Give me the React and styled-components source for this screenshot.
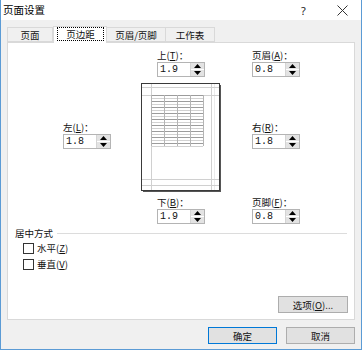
import React from 'react';
import styled, { createGlobalStyle } from 'styled-components';

const Global = createGlobalStyle`
  html, body { margin: 0; padding: 0; background: #ffffff; }
  body { font-family: "Noto Sans CJK SC", "Noto Sans", sans-serif; color: #111; }
  * { box-sizing: border-box; }
  u { text-decoration: underline; text-underline-offset: 1px; }
`;

const Window = styled.div`
  width: 362px;
  height: 350px;
  border: 1px solid #5b9bd5;
  border-top: none;
  background: #f0f0f0;
  display: flex;
  flex-direction: column;
`;

const TitleBar = styled.div`
  height: 20px;
  background: #ffffff;
  display: flex;
  align-items: center;
  padding-left: 2px;
`;

const Title = styled.div`
  font-size: 10.5px;
  line-height: 20px;
  color: #000;
  flex: 1;
`;

const TitleButton = styled.div`
  width: ${p => p.$w}px;
  height: 20px;
  display: flex;
  align-items: center;
  justify-content: center;
  font-family: "Noto Sans", sans-serif;
  font-size: 11px;
  color: #222;
`;

const Body = styled.div`
  flex: 1;
  display: flex;
  flex-direction: column;
  padding: 6px 6px 0 6px;
`;

const TabRow = styled.div`
  height: 16px;
  display: flex;
  align-items: flex-end;
`;

const Tab = styled.div`
  width: ${p => p.$w}px;
  height: ${p => (p.$active ? 17 : 15)}px;
  margin-bottom: ${p => (p.$active ? -1 : 0)}px;
  background: ${p => (p.$active ? '#ffffff' : '#f0f0f0')};
  border: 1px solid #d9d9d9;
  border-bottom: ${p => (p.$active ? 'none' : '1px solid #d9d9d9')};
  border-left: ${p => (p.$first || p.$active ? '1px solid #d9d9d9' : 'none')};
  position: relative;
  z-index: ${p => (p.$active ? 2 : 1)};
  display: flex;
  padding: ${p => (p.$active ? '0 2px 2px 3px' : '0')};
`;

const TabLabel = styled.div`
  flex: 1;
  display: flex;
  align-items: center;
  justify-content: center;
  font-size: 9.5px;
  color: #111;
  border: ${p => (p.$focus ? '1px dotted #000' : 'none')};
`;

const Panel = styled.div`
  height: 278px;
  background: #ffffff;
  border: 1px solid #d9d9d9;
  display: flex;
  flex-direction: column;
`;

const MarginGrid = styled.div`
  display: grid;
  grid-template-columns: 48px 81px 48px;
  column-gap: 30px;
  row-gap: 0;
  padding: 6px 0 0 55px;
`;

const FieldGroup = styled.div`
  grid-column: ${p => p.$col};
  grid-row: ${p => p.$row};
  margin-left: ${p => p.$indent || 0}px;
  margin-top: ${p => p.$top || 0}px;
  align-self: ${p => p.$align || 'start'};
  width: 48px;
  display: flex;
  flex-direction: column;
`;

const Label = styled.div`
  font-size: 9.5px;
  line-height: 12px;
  height: 12px;
  margin-bottom: 1px;
  color: #111;
  white-space: nowrap;
`;

const Field = styled.div`
  height: 15px;
  border: 1px solid #b4b4b4;
  background: #fff;
  display: flex;
`;

const Value = styled.div`
  flex: 1;
  font-family: "Liberation Mono", monospace;
  font-size: 10px;
  line-height: 13px;
  padding-left: 2px;
  color: #111;
`;

const Spinner = styled.div`
  width: 14px;
  display: flex;
  flex-direction: column;
  gap: 1px;
  padding: 0;
  border-left: 1px solid #d4d4d4;
`;

const SpinButton = styled.div`
  flex: 1;
  background: #e3e3e3;
  display: flex;
  align-items: center;
  justify-content: center;
`;

const PreviewCell = styled.div`
  grid-column: 2;
  grid-row: 2;
  width: 81px;
  height: 110px;
  margin-top: 6px;
`;

const SectionHeader = styled.div`
  display: flex;
  align-items: center;
  gap: 4px;
  padding: 0 7px 0 7px;
  margin-top: 3px;
`;

const SectionTitle = styled.div`
  font-size: 9.5px;
  line-height: 12px;
  color: #111;
`;

const Rule = styled.div`
  flex: 1;
  height: 1px;
  background: #dcdcdc;
`;

const CheckList = styled.div`
  display: flex;
  flex-direction: column;
  gap: 2px;
  padding-left: 15px;
  margin-top: 2px;
`;

const CheckRow = styled.div`
  height: 14px;
  display: flex;
  align-items: center;
  gap: 3px;
`;

const CheckBox = styled.div`
  width: 11px;
  height: 11px;
  border: 1px solid #333;
  background: #fff;
`;

const CheckText = styled.div`
  font-size: 9.5px;
  color: #111;
`;

const OptionsRow = styled.div`
  margin-top: auto;
  display: flex;
  justify-content: flex-end;
  padding: 0 6px 6px 0;
`;

const Button = styled.div`
  width: ${p => p.$w || 69}px;
  height: 17px;
  background: #e1e1e1;
  border: 1px solid ${p => (p.$default ? '#0078d7' : '#adadad')};
  display: flex;
  align-items: center;
  justify-content: center;
  font-size: 9.5px;
  color: #111;
  white-space: nowrap;
`;

const ButtonRow = styled.div`
  display: flex;
  justify-content: flex-end;
  gap: 9px;
  margin-top: 7px;
`;

const Up = () => (
  <svg width="7" height="4" viewBox="0 0 7 4"><polygon points="0,4 7,4 3.5,0" fill="#000" /></svg>
);
const Down = () => (
  <svg width="7" height="4" viewBox="0 0 7 4"><polygon points="0,0 7,0 3.5,4" fill="#000" /></svg>
);

const SpinField = ({ value }) => (
  <Field>
    <Value>{value}</Value>
    <Spinner>
      <SpinButton><Up /></SpinButton>
      <SpinButton><Down /></SpinButton>
    </Spinner>
  </Field>
);

const PagePreview = () => {
  const rows = [];
  for (let i = 0; i <= 17; i++) {
    const y = 12.5 + i * 3;
    rows.push(
      <line key={'r' + i} x1="10" x2="62" y1={y} y2={y} stroke={i % 2 ? '#d2d2d2' : '#9c9c9c'} strokeWidth="1" />
    );
  }
  const cols = [10.5, 23.5, 36.5, 49.5, 62.5].map((x, i) => (
    <line key={'c' + i} x1={x} x2={x} y1="12" y2="63" stroke="#b4b4b4" strokeWidth="1" />
  ));
  return (
    <svg width="81" height="110" viewBox="0 0 81 110">
      <rect x="0" y="0" width="80" height="109" fill="#fff" />
      <line x1="10.5" x2="10.5" y1="1" y2="108" stroke="#d0d0d0" />
      <line x1="70.5" x2="70.5" y1="1" y2="108" stroke="#d0d0d0" />
      <line x1="73.5" x2="73.5" y1="1" y2="108" stroke="#ececec" />
      <line x1="1" x2="79" y1="4.5" y2="4.5" stroke="#d0d0d0" />
      <line x1="1" x2="79" y1="12.5" y2="12.5" stroke="#d0d0d0" />
      <line x1="1" x2="79" y1="96.5" y2="96.5" stroke="#d0d0d0" />
      <line x1="1" x2="79" y1="102.5" y2="102.5" stroke="#d0d0d0" />
      {rows}
      {cols}
      <rect x="0.5" y="0.5" width="78" height="107" fill="none" stroke="#3a3a3a" />
      <line x1="79.5" x2="79.5" y1="2" y2="109" stroke="#555" />
      <line x1="2" x2="80" y1="108.5" y2="108.5" stroke="#555" />
    </svg>
  );
};

export default function App() {
  return (
    <>
      <Global />
      <Window>
        <TitleBar>
          <Title>页面设置</Title>
          <TitleButton $w={39}>?</TitleButton>
          <TitleButton $w={38}>
            <svg width="11" height="11" viewBox="0 0 11 11">
              <path d="M0.5 0.5 L10.5 10.5 M10.5 0.5 L0.5 10.5" stroke="#333" strokeWidth="1" />
            </svg>
          </TitleButton>
        </TitleBar>
        <Body>
          <TabRow>
            <Tab $w={46} $first><TabLabel>页面</TabLabel></Tab>
            <Tab $w={54} $active><TabLabel $focus>页边距</TabLabel></Tab>
            <Tab $w={59}><TabLabel>页眉/页脚</TabLabel></Tab>
            <Tab $w={49}><TabLabel>工作表</TabLabel></Tab>
          </TabRow>
          <Panel>
            <MarginGrid>
              <FieldGroup $col={2} $row={1} $indent={16}>
                <Label>上(<u>T</u>)：</Label>
                <SpinField value="1.9" />
              </FieldGroup>
              <FieldGroup $col={3} $row={1}>
                <Label>页眉(<u>A</u>)：</Label>
                <SpinField value="0.8" />
              </FieldGroup>
              <FieldGroup $col={1} $row={2} $align="center">
                <Label>左(<u>L</u>)：</Label>
                <SpinField value="1.8" />
              </FieldGroup>
              <PreviewCell>
                <PagePreview />
              </PreviewCell>
              <FieldGroup $col={3} $row={2} $align="center">
                <Label>右(<u>R</u>)：</Label>
                <SpinField value="1.8" />
              </FieldGroup>
              <FieldGroup $col={2} $row={3} $indent={16} $top={3}>
                <Label>下(<u>B</u>)：</Label>
                <SpinField value="1.9" />
              </FieldGroup>
              <FieldGroup $col={3} $row={3} $top={3}>
                <Label>页脚(<u>F</u>)：</Label>
                <SpinField value="0.8" />
              </FieldGroup>
            </MarginGrid>
            <SectionHeader>
              <SectionTitle>居中方式</SectionTitle>
              <Rule />
            </SectionHeader>
            <CheckList>
              <CheckRow>
                <CheckBox />
                <CheckText>水平(<u>Z</u>)</CheckText>
              </CheckRow>
              <CheckRow>
                <CheckBox />
                <CheckText>垂直(<u>V</u>)</CheckText>
              </CheckRow>
            </CheckList>
            <OptionsRow>
              <Button $w={70}>选项(<u>O</u>)...</Button>
            </OptionsRow>
          </Panel>
          <ButtonRow>
            <Button $default>确定</Button>
            <Button>取消</Button>
          </ButtonRow>
        </Body>
      </Window>
    </>
  );
}
